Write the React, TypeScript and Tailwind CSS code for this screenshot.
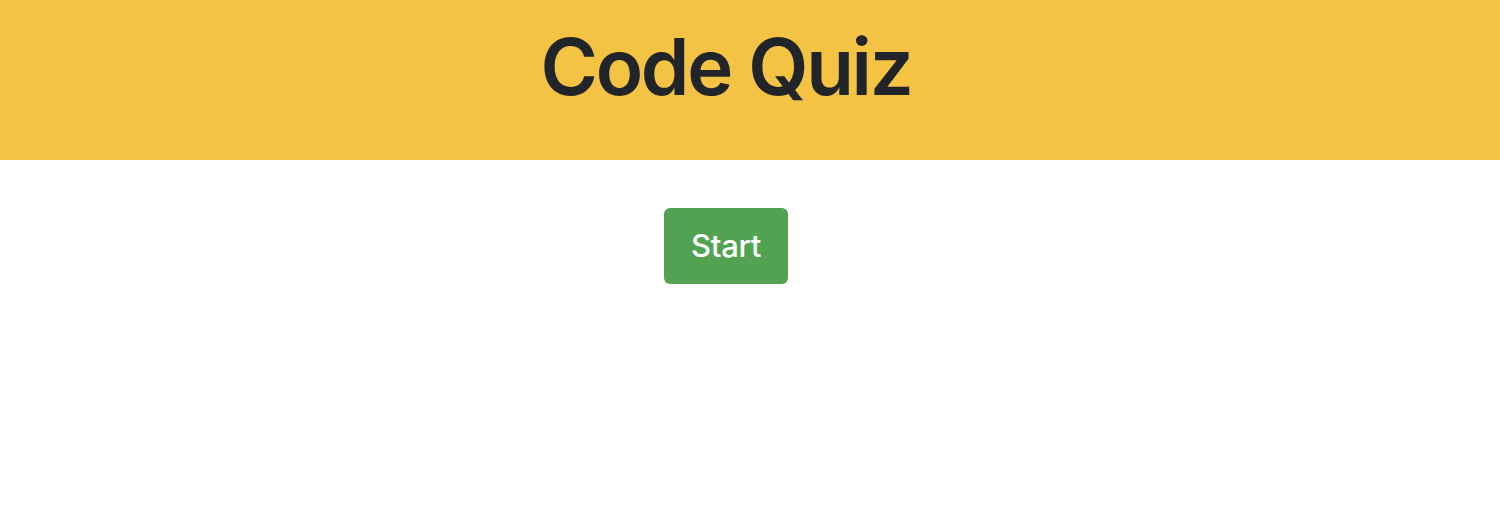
const App = () => {
    return (
        <div className="w-full min-h-[506px] bg-white" style={{ fontFamily: "Inter, 'Noto Sans', sans-serif" }}>
            {/* Header */}
            <header className="w-full h-[160px] bg-[#f5c344] flex justify-center pr-[48px]">
                <h1 className="mt-[20px] text-[78px] leading-[1.2] font-semibold tracking-[-0.03em] text-[#212529]">
                    Code Quiz
                </h1>
            </header>

            {/* Start */}
            <main className="flex justify-center pr-[48px] pt-[48px]">
                <button className="w-[124px] h-[76px] rounded-[6px] bg-[#51a351] text-white text-[31px] font-medium tracking-[-0.01em] flex items-center justify-center">
                    Start
                </button>
            </main>
        </div>
    )
}

export default App;
